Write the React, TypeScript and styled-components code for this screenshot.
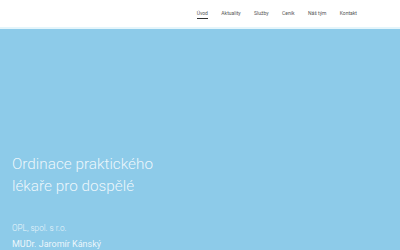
import styled, { createGlobalStyle } from 'styled-components';

const GlobalStyle = createGlobalStyle`
  html, body {
    margin: 0;
    padding: 0;
    height: 100%;
    overflow: hidden;
  }
  body {
    font-family: Roboto, "Liberation Sans", sans-serif;
    background: #8dcbe9;
  }
`;

const items = ['Úvod', 'Aktuality', 'Služby', 'Ceník', 'Náš tým', 'Kontakt'];

const Header = styled.header`
  height: 27px;
  background: #ffffff;
  border-bottom: 2px solid #e4f5fb;
  display: flex;
  justify-content: flex-end;
  align-items: center;
  padding-right: 43px;
`;

const Nav = styled.nav`
  display: flex;
  gap: 13.4px;
`;

const NavLink = styled.a<{ $active?: boolean }>`
  font-size: 5px;
  color: #555;
  text-decoration: none;
  padding: 2px 0;
  border-bottom: 1px solid ${(p) => (p.$active ? '#333' : 'transparent')};
`;

const Hero = styled.section`
  height: 221px;
  background: #8dcbe9;
  padding: 0 12px;
  display: flex;
  flex-direction: column;
  color: rgba(255, 255, 255, 0.85);
`;

const Title = styled.h1`
  margin: 124px 0 0;
  font-weight: 300;
  font-size: 15.3px;
  line-height: 22px;
`;

const Company = styled.div`
  margin-top: 26px;
  font-size: 8.2px;
  font-weight: 300;
`;

const Doctor = styled.div`
  margin-top: 6px;
  font-size: 9px;
  font-weight: 400;
`;

export default function App() {
  return (
    <>
      <GlobalStyle />
      <Header>
        <Nav>
          {items.map((it, i) => (
            <NavLink key={it} href="#" $active={i === 0}>
              {it}
            </NavLink>
          ))}
        </Nav>
      </Header>
      <Hero>
        <Title>
          Ordinace praktického
          <br />
          lékaře pro dospělé
        </Title>
        <Company>OPL, spol. s r.o.</Company>
        <Doctor>MUDr. Jaromír Kánský</Doctor>
      </Hero>
    </>
  );
}
